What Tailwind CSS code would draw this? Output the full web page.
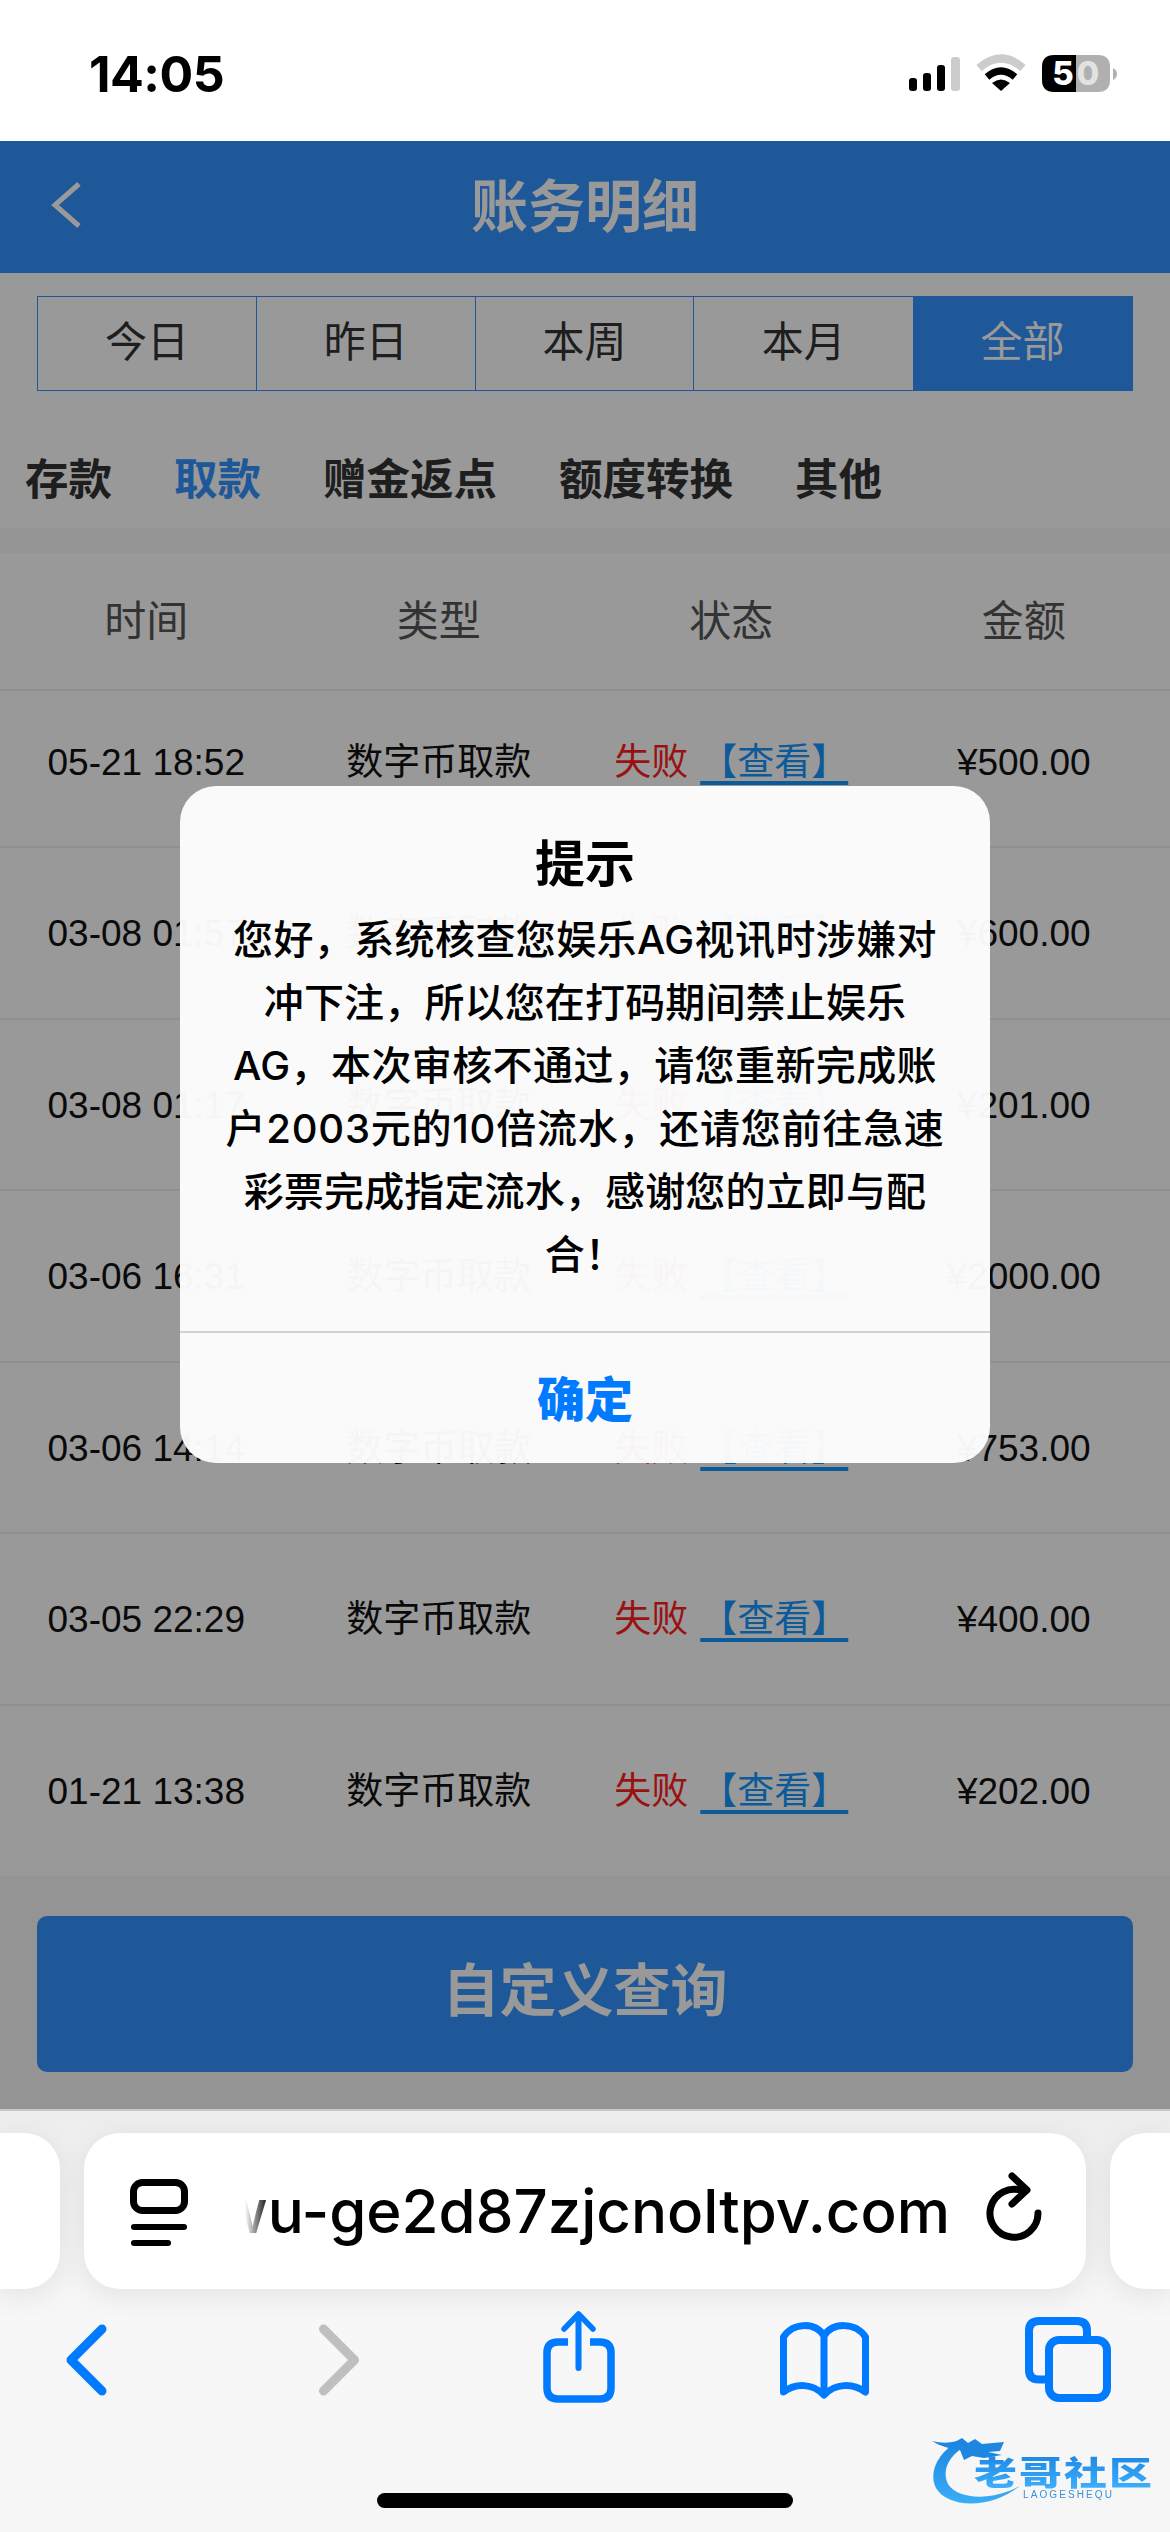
<!DOCTYPE html>
<html lang="zh-CN">
<head>
<meta charset="utf-8">
<title>账务明细</title>
<script src="https://cdn.jsdelivr.net/npm/@tailwindcss/browser@4"></script>
</head>
<body class="m-0 bg-white">
<div class="relative w-[1170px] h-[2532px] overflow-hidden bg-white font-['Liberation_Sans','Noto_Sans_CJK_SC',sans-serif]">

  <!-- status bar -->
  <div class="h-[141px] flex items-center justify-between pl-[89px] pr-[48px] pt-[7px]">
    <span class="font-['Inter','Liberation_Sans',sans-serif] font-bold text-[50px] leading-none text-black tracking-[-0.5px]">14:05</span>
    <svg class="w-[220px] h-[48px]" viewBox="900 50 220 48" aria-hidden="true">
      <rect x="907" y="78" width="8" height="13" rx="3" fill="#000"/>
      <rect x="921" y="73" width="8" height="18" rx="3" fill="#000"/>
      <rect x="935" y="65" width="8" height="26" rx="3" fill="#000"/>
      <rect x="949" y="57" width="9" height="34" rx="3" fill="#ccc"/>
      <path d="M977 68 Q999 49 1021 68" fill="none" stroke="#ccc" stroke-width="8" stroke-linecap="butt"/>
      <path d="M985 77 Q999 65 1013 77" fill="none" stroke="#000" stroke-width="7"/>
      <path d="M990 83 Q999 76 1008 83 L999 91 Z" fill="#000"/>
      <path d="M1052 55 H1074 V92 H1052 Q1040 92 1040 80 V67 Q1040 55 1052 55 Z" fill="#000"/>
      <path d="M1074 55 H1096 Q1108 55 1108 67 V80 Q1108 92 1096 92 H1074 Z" fill="#b0b0b0"/>
      <path d="M1111 68 Q1115 70 1115 74 Q1115 78 1111 80 Z" fill="#b0b0b0"/>
      <text x="1061" y="85" text-anchor="middle" font-family="Inter" font-weight="800" font-size="33" fill="#fff">5</text>
      <text x="1086" y="85" text-anchor="middle" font-family="Inter" font-weight="800" font-size="33" fill="#e2e2e2">0</text>
    </svg>
  </div>

  <!-- header -->
  <header class="relative h-[132px] bg-[#3293ff] flex items-center justify-center">
    <svg class="absolute left-[44px] top-[36px] w-[44px] h-[56px]" viewBox="44 177 44 56" aria-hidden="true">
      <path d="M79 184 L55 205 L79 226" fill="none" stroke="#fff" stroke-width="5"/>
    </svg>
    <h1 class="text-[57px] leading-none font-bold text-white">账务明细</h1>
  </header>

  <!-- range filter -->
  <div class="pt-[23px] px-[37px]">
    <div class="grid grid-cols-5 h-[95px] border-[1.5px] border-[#3293ff] text-[42px] text-[#333]">
      <div class="flex items-center justify-center border-r-[1.5px] border-[#3293ff] pb-[2px]">今日</div>
      <div class="flex items-center justify-center border-r-[1.5px] border-[#3293ff] pb-[2px]">昨日</div>
      <div class="flex items-center justify-center border-r-[1.5px] border-[#3293ff] pb-[2px]">本周</div>
      <div class="flex items-center justify-center pb-[2px]">本月</div>
      <div class="flex items-center justify-center bg-[#3293ff] text-white pb-[2px]">全部</div>
    </div>
  </div>

  <!-- type tabs -->
  <nav class="h-[137px] pl-[25px] pt-[42px] flex items-center gap-[62px] text-[43.5px] font-bold text-[#333]">
    <span>存款</span>
    <span class="text-[#3293ff]">取款</span>
    <span>赠金返点</span>
    <span>额度转换</span>
    <span>其他</span>
  </nav>
  <div class="h-[25px] bg-[#f7f7f7]"></div>

  <!-- table -->
  <section>
    <div class="grid grid-cols-4 h-[138px] items-center text-center text-[42px] text-[#555] border-b-[2px] border-[#efefef]">
      <span>时间</span><span>类型</span><span>状态</span><span>金额</span>
    </div>
    <div class="grid grid-cols-4 h-[157px] items-center text-center text-[37px] text-[#111] border-b-[2px] border-[#efefef] pb-[12px]">
      <span>05-21 18:52</span><span>数字币取款</span>
      <span><span class="text-[#ff1e1e]">失败</span><span class="ml-[12px] text-[#1696ff] underline decoration-[4px] underline-offset-[6px]">【查看】</span></span>
      <span>¥500.00</span>
    </div>
    <div class="grid grid-cols-4 h-[171.5px] items-center text-center text-[37px] text-[#111] border-b-[2px] border-[#efefef] pt-[2px]">
      <span>03-08 01:57</span><span>数字币取款</span>
      <span><span class="text-[#ff1e1e]">失败</span><span class="ml-[12px] text-[#1696ff] underline decoration-[4px] underline-offset-[6px]">【查看】</span></span>
      <span>¥600.00</span>
    </div>
    <div class="grid grid-cols-4 h-[171.5px] items-center text-center text-[37px] text-[#111] border-b-[2px] border-[#efefef] pt-[2px]">
      <span>03-08 01:17</span><span>数字币取款</span>
      <span><span class="text-[#ff1e1e]">失败</span><span class="ml-[12px] text-[#1696ff] underline decoration-[4px] underline-offset-[6px]">【查看】</span></span>
      <span>¥201.00</span>
    </div>
    <div class="grid grid-cols-4 h-[171.5px] items-center text-center text-[37px] text-[#111] border-b-[2px] border-[#efefef] pt-[2px]">
      <span>03-06 16:31</span><span>数字币取款</span>
      <span><span class="text-[#ff1e1e]">失败</span><span class="ml-[12px] text-[#1696ff] underline decoration-[4px] underline-offset-[6px]">【查看】</span></span>
      <span>¥2000.00</span>
    </div>
    <div class="grid grid-cols-4 h-[171.5px] items-center text-center text-[37px] text-[#111] border-b-[2px] border-[#efefef] pt-[2px]">
      <span>03-06 14:14</span><span>数字币取款</span>
      <span><span class="text-[#ff1e1e]">失败</span><span class="ml-[12px] text-[#1696ff] underline decoration-[4px] underline-offset-[6px]">【查看】</span></span>
      <span>¥753.00</span>
    </div>
    <div class="grid grid-cols-4 h-[171.5px] items-center text-center text-[37px] text-[#111] border-b-[2px] border-[#efefef] pt-[2px]">
      <span>03-05 22:29</span><span>数字币取款</span>
      <span><span class="text-[#ff1e1e]">失败</span><span class="ml-[12px] text-[#1696ff] underline decoration-[4px] underline-offset-[6px]">【查看】</span></span>
      <span>¥400.00</span>
    </div>
    <div class="grid grid-cols-4 h-[170px] items-center text-center text-[37px] text-[#111] pt-[2px]">
      <span>01-21 13:38</span><span>数字币取款</span>
      <span><span class="text-[#ff1e1e]">失败</span><span class="ml-[12px] text-[#1696ff] underline decoration-[4px] underline-offset-[6px]">【查看】</span></span>
      <span>¥202.00</span>
    </div>
  </section>

  <!-- custom query -->
  <div class="h-[233.5px] bg-[#f7f7f7] pt-[40px] px-[37px]">
    <div class="h-[156px] rounded-[10px] bg-[#3293ff] flex items-center justify-center text-[57px] font-bold text-white pb-[4px]">自定义查询</div>
  </div>

  <!-- safari toolbar -->
  <div class="h-[423px] bg-gradient-to-b from-[#ededed] via-[#f7f7f7] to-[#f6f6f6] pt-[22px] border-t-[2px] border-[#c8c8c8]">
    <div class="flex h-[156px]">
      <div class="w-[60px] h-full rounded-r-[36px] bg-white shadow-[0_6px_30px_rgba(0,0,0,0.08)]"></div>
      <div class="ml-[24px] w-[1002px] h-full rounded-[36px] bg-white shadow-[0_6px_30px_rgba(0,0,0,0.08)] flex items-center pl-[42px]">
        <svg class="w-[70px] h-[80px] shrink-0" viewBox="126 2170 70 80" aria-hidden="true">
          <rect x="133.5" y="2181.5" width="51" height="28" rx="9" fill="none" stroke="#000" stroke-width="7"/>
          <path d="M134 2226 H184" stroke="#000" stroke-width="6" stroke-linecap="round"/>
          <path d="M134 2242 H168" stroke="#000" stroke-width="6" stroke-linecap="round"/>
        </svg>
        <div class="relative ml-[49px] w-[705px] h-[90px] overflow-hidden flex items-center justify-end">
          <span class="shrink-0 whitespace-nowrap font-['Inter','Liberation_Sans',sans-serif] font-medium text-[60px] leading-none text-black">wu-ge2d87zjcnoltpv.com</span>
          <div class="absolute left-0 top-0 h-full w-[24px] bg-gradient-to-r from-white to-white/0"></div>
        </div>
        <svg class="ml-[25px] w-[80px] h-[80px] shrink-0" viewBox="975 2170 80 80" aria-hidden="true">
          <path d="M1038 2212 A24 24 0 1 1 1023 2190" fill="none" stroke="#000" stroke-width="7" stroke-linecap="round"/>
          <path d="M1012 2175 L1027 2189 L1012 2203" fill="none" stroke="#000" stroke-width="7" stroke-linecap="round" stroke-linejoin="round"/>
        </svg>
      </div>
      <div class="ml-[24px] flex-1 h-full rounded-l-[36px] bg-white shadow-[0_6px_30px_rgba(0,0,0,0.08)]"></div>
    </div>
    <div class="mt-[16px] h-[105px] pl-[26px] pr-[42px] flex justify-between">
      <svg class="w-[120px] h-[105px]" viewBox="26 2305 120 105" aria-hidden="true">
        <path d="M102 2329 L71 2360 L102 2391" fill="none" stroke="#007aff" stroke-width="9" stroke-linecap="round" stroke-linejoin="round"/>
      </svg>
      <svg class="w-[120px] h-[105px]" viewBox="271.5 2305 120 105" aria-hidden="true">
        <path d="M323 2329 L354 2360 L323 2391" fill="none" stroke="#bfbfbf" stroke-width="9" stroke-linecap="round" stroke-linejoin="round"/>
      </svg>
      <svg class="w-[120px] h-[105px]" viewBox="517 2305 120 105" aria-hidden="true">
        <path d="M568 2342 H558 Q547 2342 547 2353 V2388 Q547 2399 558 2399 H600 Q611 2399 611 2388 V2353 Q611 2342 600 2342 H590" fill="none" stroke="#007aff" stroke-width="7.5"/>
        <path d="M578.500 2316 V2368" stroke="#007aff" stroke-width="6" stroke-linecap="round"/>
        <path d="M564 2329 L578.500 2314 L593 2329" fill="none" stroke="#007aff" stroke-width="5.500" stroke-linecap="round" stroke-linejoin="round"/>
      </svg>
      <svg class="w-[120px] h-[105px]" viewBox="762.5 2305 120 105" aria-hidden="true">
        <path d="M823.500 2336 C815 2322 793 2322 783 2337 V2392 C795 2383 812 2383 823.500 2395 C835 2383 852 2383 865 2392 V2337 C855 2322 832 2322 823.500 2336 V2395" fill="none" stroke="#007aff" stroke-width="7" stroke-linejoin="round"/>
      </svg>
      <svg class="w-[120px] h-[105px]" viewBox="1008 2305 120 105" aria-hidden="true">
        <path d="M1045 2379.500 H1039 Q1029 2379.500 1029 2370 V2331 Q1029 2321 1039 2321 H1077 Q1087 2321 1087 2331 V2339" fill="none" stroke="#007aff" stroke-width="8"/>
        <rect x="1049" y="2340" width="58" height="58" rx="10" fill="none" stroke="#007aff" stroke-width="8"/>
      </svg>
    </div>
  </div>

  <!-- dim layer and alert -->
  <div class="absolute left-0 top-[141px] w-full h-[1968px] bg-black/40 flex justify-center">
    <div class="mt-[645px] w-[810px] h-[677px] rounded-[36px] bg-[#fdfdfd]/[0.97] text-center text-black flex flex-col">
      <div class="pt-[49px] text-[50px] leading-[60px] font-bold">提示</div>
      <div class="mt-[13px] text-[40px] leading-[63px] font-medium tracking-[0.15px] font-['Inter','Noto_Sans_CJK_SC',sans-serif]">
        <p class="tracking-[0.4px]">您好，系统核查您娱乐AG视讯时涉嫌对</p>
        <p>冲下注，所以您在打码期间禁止娱乐</p>
        <p class="tracking-[0.4px]">AG，本次审核不通过，请您重新完成账</p>
        <p class="tracking-[0.75px]">户2003元的10倍流水，还请您前往急速</p>
        <p>彩票完成指定流水，感谢您的立即与配</p>
        <p>合！</p>
      </div>
      <div class="mt-[45px] h-[2px] bg-[#d2d2d2]"></div>
      <div class="flex-1 flex items-center justify-center pt-[5px] text-[48px] font-black text-[#007aff]">确定</div>
    </div>
  </div>

  <!-- home indicator -->
  <div class="absolute left-[377px] top-[2493px] w-[416px] h-[15px] rounded-full bg-black"></div>

  <!-- watermark -->
  <div class="absolute left-[925px] top-[2430px] w-[235px] h-[85px] blur-[0.6px]">
    <svg class="absolute left-0 top-0 w-[235px] h-[85px]" viewBox="925 2430 235 85" aria-hidden="true">
      <defs>
        <linearGradient id="sw" x1="0" y1="0" x2="0" y2="1">
          <stop offset="0" stop-color="#1c86e0"/>
          <stop offset="1" stop-color="#39adf8"/>
        </linearGradient>
      </defs>
      <path d="M960 2440 C938 2452 928 2472 936 2488 C946 2506 986 2512 1020 2486 C992 2501 958 2500 948 2484 C941 2470 950 2454 966 2446 Z" fill="url(#sw)"/>
      <path d="M932 2441 C948 2445 958 2441 962 2438 L968 2443 L975 2439 L982 2444 L1004 2442 L1000 2451 L988 2452 L1002 2455 L984 2458 L972 2456 L964 2460 L960 2450 C950 2449 940 2446 932 2441 Z" fill="#1c86e0"/>
    </svg>
    <div class="absolute left-[48px] top-[25px] w-[180px] grid grid-cols-4 text-center text-[33px] leading-[38px] font-black">
      <span class="inline-block scale-x-[1.3] bg-gradient-to-b from-[#1e88e5] to-[#40b4ff] bg-clip-text text-transparent">老</span>
      <span class="inline-block scale-x-[1.3] bg-gradient-to-b from-[#1e88e5] to-[#40b4ff] bg-clip-text text-transparent">哥</span>
      <span class="inline-block scale-x-[1.3] bg-gradient-to-b from-[#1e88e5] to-[#40b4ff] bg-clip-text text-transparent">社</span>
      <span class="inline-block scale-x-[1.3] bg-gradient-to-b from-[#1e88e5] to-[#40b4ff] bg-clip-text text-transparent">区</span>
    </div>
    <div class="absolute left-[98px] top-[59px] text-[10px] leading-[11px] tracking-[2.1px] text-[#3c8fd8]">LAOGESHEQU</div>
  </div>
</div>
</body>
</html>
